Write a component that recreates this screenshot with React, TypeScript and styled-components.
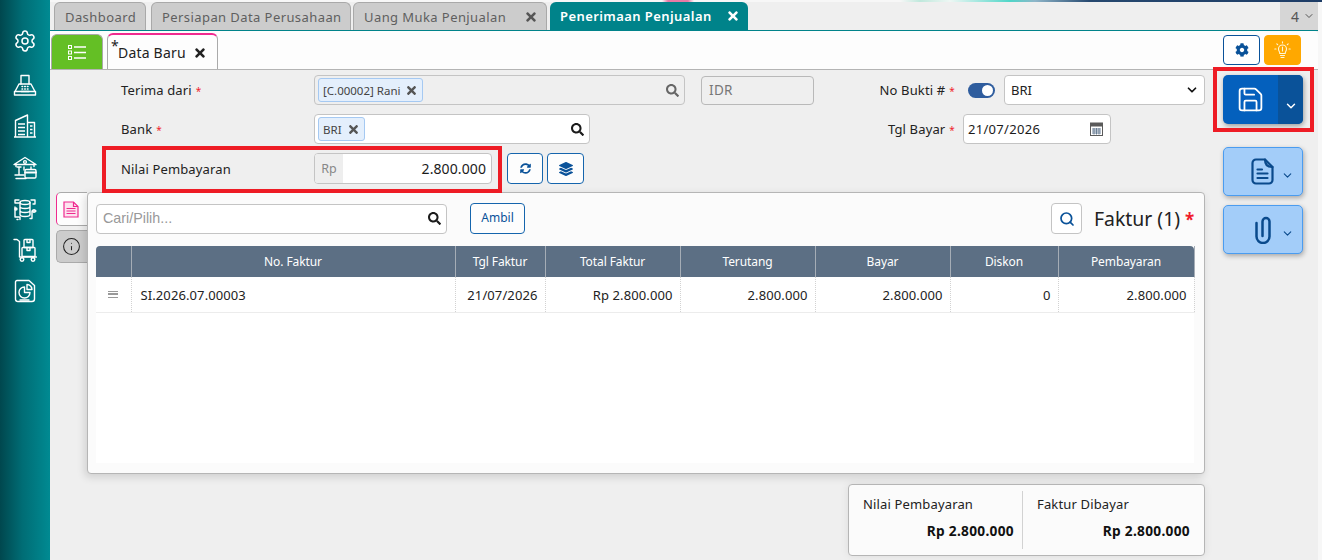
import React from "react";
import styled, { createGlobalStyle } from "styled-components";
import { FaTimes, FaSearch, FaCog, FaSyncAlt, FaLayerGroup } from "react-icons/fa";
import { Save, ChevronDown, Info, Settings, Search as SearchIcon } from "lucide-react";

const Global = createGlobalStyle`
  html, body { margin: 0; padding: 0; height: 560px; overflow: hidden; background: #f7f7f7; }
  body { font-family: "Noto Sans", "Open Sans", sans-serif; font-size: 13px; color: #1b1b1b; }
  * { box-sizing: border-box; }
`;

const Page = styled.div`display: flex; width: 1322px; height: 560px;`;
const Sidebar = styled.aside`
  width: 50px; height: 560px; flex: none; display: flex; flex-direction: column; align-items: center;
  padding-top: 29px; gap: 17.2px; background: linear-gradient(90deg, #00474e 0%, #006d75 45%, #008a92 100%);
  svg { display: block; width: 24px; height: 24px; color: #fff; flex: none; }
  svg:first-child { margin-bottom: 3px; }
`;
const Main = styled.main`width: 1268px; flex: none; display: flex; flex-direction: column; background: #efefef;`;
const TabBar = styled.div`
  height: 31px; flex: none; display: flex; align-items: flex-end; padding: 2px 0 0 4px; position: relative;
  border-bottom: 1px solid #00838a; background: #efefef;
`;
const TopStrip = styled.div`
  position: absolute; left: 0; right: -4px; top: 0; height: 2px;
  background: linear-gradient(90deg, #f7f7f7 0, #f7f7f7 612px, #e87aa5 618px, #e87aa5 638px, #f7f7f7 644px, #f7f7f7 850px, #bfe8dc 870px, #eef7f4 900px, #4fd6c8 960px, #8fb6c9 985px, #26486f 1040px, #1d3c66 1272px);
`;
const Tab = styled.div<{ $active?: boolean; $w: number; $ml?: number }>`
  width: ${p => p.$w}px; height: 28px; margin-left: ${p => p.$ml ?? 0}px; flex: none; white-space: nowrap;
  display: flex; align-items: center; justify-content: space-between; padding: 0 10px;
  border-radius: 6px 6px 0 0; letter-spacing: .42px; font-size: 13px;
  background: ${p => (p.$active ? "#00838a" : "#cccccc")};
  color: ${p => (p.$active ? "#fff" : "#5f5f5f")};
  font-weight: ${p => (p.$active ? 600 : 400)};
  border: ${p => (p.$active ? "none" : "1px solid #a9a9a9")};
  border-bottom: none;
  svg { font-size: 14px; color: ${p => (p.$active ? "#fff" : "#555")}; margin-right: -2px; }
`;
const TabCount = styled.div`
  margin-left: auto; width: 38px; height: 28px; background: #d6d6d6; color: #555; display: flex;
  align-items: center; justify-content: flex-end; gap: 4px; padding-right: 3px; font-size: 14px;
`;
const SubBar = styled.div`
  height: 39px; flex: none; background: #fdfdfd; border-bottom: 1px solid #b4b4b4; display: flex;
  align-items: flex-end; padding: 0 17px 0 1px; border-top-right-radius: 4px;
`;
const ListBtn = styled.div`
  width: 52px; height: 35px; background: #64bf25; border: 1px solid #a9a9a9; border-bottom: none;
  border-radius: 6px 6px 0 0; display: flex; align-items: center; justify-content: center;
`;
const DocTab = styled.div`
  width: 111px; height: 36px; margin-left: 4px; position: relative; background: #fdfdfd;
  border: 1px solid #aaa; border-top: 2px solid #ef2a8f; border-bottom: none; border-radius: 6px 6px 0 0;
  display: flex; align-items: center; padding: 0 0 0 10px; font-size: 14px; letter-spacing: .2px; color: #222;
  svg { margin-left: 7px; margin-top: 2px; font-size: 14px; color: #222; }
`;
const Star = styled.span`position: absolute; left: 3px; top: 1px; font-size: 14px;`;
const TopBtns = styled.div`margin-left: auto; display: flex; gap: 4px; align-self: flex-start; padding-top: 4px;`;
const SquareBtn = styled.div<{ $orange?: boolean }>`
  width: 37px; height: 30px; border-radius: 4px; display: flex; align-items: center; justify-content: center;
  background: ${p => (p.$orange ? "#ffa800" : "#fff")};
  border: 1px solid ${p => (p.$orange ? "#ffa800" : "#0a5299")};
  color: ${p => (p.$orange ? "#fff3c9" : "#0a5299")}; font-size: 14px;
`;
const Body = styled.div`flex: 1; display: flex; align-items: flex-start; padding-top: 5px;`;
const Left = styled.div`width: 1155px; flex: none; display: flex; flex-direction: column;`;
const Row = styled.div<{ $mb: number; $h?: number }>`
  display: grid; grid-template-columns: 810px 345px; height: ${p => p.$h ?? 30}px; margin-bottom: ${p => p.$mb}px; position: relative;
`;
const LeftCell = styled.div`display: flex; align-items: center; padding-left: 71px;`;
const RightCell = styled.div`display: flex; align-items: center;`;
const Label = styled.label`width: 193px; flex: none; font-size: 13px; letter-spacing: .14px; color: #222;`;
const Req = styled.span`color: #f01c2c; margin-left: 4px; font-size: 10px;`;
const RightLabel = styled.label`width: 95px; flex: none; text-align: right; font-size: 13px; letter-spacing: .14px; color: #222;`;
const Lookup = styled.div<{ $w: number; $muted?: boolean }>`
  width: ${p => p.$w}px; height: 30px; flex: none; border: 1px solid #c4c4c4; border-radius: 4px;
  background: ${p => (p.$muted ? "#efefef" : "#fff")}; display: flex; align-items: center; padding: 0 5px 0 3px;
  svg.s { margin-left: auto; font-size: 13px; color: ${p => (p.$muted ? "#666" : "#1b1b1b")}; }
`;
const Chip = styled.span`
  height: 24px; display: inline-flex; align-items: center; gap: 5px; padding: 0 4px; border: 1px solid #a5c9f2;
  border-radius: 3px; background: #e4effc; font-size: 11.5px; color: #444;
  svg { font-size: 13px; color: #555; }
`;
const Readonly = styled.input`
  width: 113px; height: 29px; margin-left: 16px; border: 1px solid #b9b9b9; border-radius: 4px;
  background: #efefef; padding: 0 7px; font: 13.5px "Noto Sans", sans-serif; color: #777; letter-spacing: .3px; outline: none;
`;
const Toggle = styled.div`
  width: 27px; height: 15px; margin-left: 13px; border-radius: 8px; background: #2f5d9e; position: relative; flex: none;
  &::after { content: ""; position: absolute; right: 2px; top: 2px; width: 11px; height: 11px; border-radius: 50%; background: #fff; }
`;
const SelectWrap = styled.div`
  width: 201px; height: 30px; margin-left: 9px; position: relative;
  svg { position: absolute; right: 6px; top: 8px; pointer-events: none; color: #111; }
`;
const Select = styled.select`
  width: 100%; height: 100%; appearance: none; border: 1px solid #c4c4c4; border-radius: 4px; background: #fff;
  padding: 0 6px; font: 13px "Noto Sans", sans-serif; color: #222; outline: none;
`;
const DateBox = styled.div`
  width: 148px; height: 30px; margin-left: 8px; border: 1px solid #c4c4c4; border-radius: 4px; background: #fff;
  display: flex; align-items: center; justify-content: space-between; padding: 0 7px 0 4px; font-size: 13px; letter-spacing: .3px;
`;
const Amount = styled.div`
  width: 178px; height: 31px; flex: none; border: 1px solid #c4c4c4; border-radius: 4px; background: #fff;
  display: flex; align-items: center; overflow: hidden; font-size: 14px;
`;
const Prefix = styled.span`
  width: 28px; height: 100%; background: #eeeeee; color: #888; display: flex; align-items: center; justify-content: center; font-size: 12.5px;
`;
const AmountValue = styled.span`margin-left: auto; padding-right: 5px; letter-spacing: .1px; color: #1b1b1b;`;
const OutlineBtn = styled.button<{ $w: number; $ml: number; $fs: number }>`
  width: ${p => p.$w}px; height: 31px; margin-left: ${p => p.$ml}px; flex: none; border: 1px solid #1565ad; border-radius: 4px;
  background: #fdfdfd; color: #0a5299; display: flex; align-items: center; justify-content: center; font-size: ${p => p.$fs}px; padding: 0;
`;
const Highlight = styled.div`
  position: absolute; pointer-events: none; border: 4.5px solid #ee1c25;
`;
const FieldHighlight = styled(Highlight)`left: 52px; top: -7px; width: 400px; height: 47px;`;
const SaveHighlight = styled(Highlight)`left: -10px; top: -8px; width: 101px; height: 65px;`;
const CardArea = styled.div`display: flex; padding-left: 6px; height: 282px;`;
const SideTabs = styled.div`width: 31px; flex: none; display: flex; flex-direction: column; gap: 4px;`;
const SideTab = styled.div<{ $active?: boolean }>`
  width: 31px; height: ${p => (p.$active ? 34 : 33)}px; display: flex; align-items: center; justify-content: center;
  padding-right: 2px; border-radius: 5px 0 0 5px;
  background: ${p => (p.$active ? "#fdfdfd" : "#cccccc")};
  border: 1px solid #aaa; border-left: 1px solid ${p => (p.$active ? "#ef2a8f" : "#aaa")}; border-right: none;
  color: ${p => (p.$active ? "#ef2a8f" : "#222")};
`;
const Card = styled.section`
  width: 1118px; flex: none; height: 282px; background: #fbfbfb; border: 1px solid #b5b5b5; border-radius: 4px;
  box-shadow: -2px 3px 8px rgba(0,0,0,.14); padding: 10px 10px 10px 8px; display: flex; flex-direction: column;
`;
const CardHead = styled.div`display: flex; align-items: center; height: 31px; margin-bottom: 12px;`;
const Search = styled.div`
  width: 351px; height: 30px; border: 1px solid #c4c4c4; border-radius: 4px; background: #fff; display: flex;
  align-items: center; justify-content: space-between; padding: 0 5px 2px 6px; font: 14.3px "Liberation Sans", sans-serif; color: #999;
  svg { font-size: 13px; color: #1b1b1b; margin-top: 2px; }
`;
const AmbilBtn = styled.button`
  width: 55px; height: 31px; margin-left: 23px; border: 1px solid #1565ad; border-radius: 4px; background: #fdfdfd;
  color: #0a5299; font: 12px "Noto Sans", sans-serif; padding: 0 0 2px;
`;
const IconBtn = styled.button`
  width: 31px; height: 31px; margin-left: auto; border: 1px solid #c4c4c4; border-radius: 4px; background: #fff; color: #0a5299;
  display: flex; align-items: center; justify-content: center; padding: 0;
`;
const CardTitle = styled.h2`margin: 0 0 0 12px; font-size: 19.4px; font-weight: 400; color: #222; white-space: nowrap; width: 100px;`;
const TitleStar = styled.span`color: #f01c2c; margin-left: 5px; font-size: 17px; font-weight: 700;`;
const TableWrap = styled.div`flex: 1; background: #fff;`;
const Table = styled.table`width: 1098px; border-collapse: collapse; table-layout: fixed; font-size: 13px;`;
const Th = styled.th`
  height: 31px; background: #5c6f84; color: #fff; font-weight: 400; font-size: 12px; letter-spacing: -.1px; padding: 0;
  border-right: 1px solid #a5adb6; text-align: center;
  &:first-child { border-top-left-radius: 4px; }
  &:last-child { border-top-right-radius: 4px; }
`;
const Td = styled.td<{ $align?: string }>`
  height: 35px; padding: 1px 7px 0 9px; text-align: ${p => p.$align ?? "right"}; border-bottom: 1px solid #ececec;
  border-right: 1px dotted #d2d2d2; color: #222; white-space: nowrap; letter-spacing: .1px;
`;
const GripCell = styled(Td)`padding: 0; text-align: center; color: #999;`;
const Grip = styled.span`
  display: block; width: 10px; height: 7px; margin: 0 auto; border-top: 1.5px solid #999; border-bottom: 1.5px solid #999; position: relative;
  &::after { content: ""; position: absolute; left: 0; right: 0; top: 1.5px; height: 1.5px; background: #999; }
`;
const Summary = styled.div`
  width: 357px; height: 72px; margin: 10px 0 0 798px; background: #fbfbfb; border: 1px solid #b5b5b5; border-radius: 4px;
  box-shadow: 0 0 8px rgba(0,0,0,.08); display: grid; grid-template-columns: 173px 1fr; padding: 6px 0;
`;
const SummaryCol = styled.div<{ $sep?: boolean }>`
  display: flex; flex-direction: column; gap: 8px; padding: ${p => (p.$sep ? "4px 14px 0" : "4px 8px 0 14px")};
  ${p => (p.$sep ? "border-left: 1px solid #d2d2d2;" : "")}
`;
const SummaryLabel = styled.div`font-size: 13px; letter-spacing: .15px; color: #222;`;
const SummaryValue = styled.div`font-size: 13.7px; font-weight: 700; text-align: right; letter-spacing: .3px; color: #111;`;
const Right = styled.div`width: 80px; margin-left: 18px; flex: none; display: flex; flex-direction: column; position: relative;`;
const SaveBtn = styled.div`
  height: 49px; display: grid; grid-template-columns: 55px 25px; border-radius: 5px; overflow: hidden; color: #fff;
  box-shadow: 1px 2px 5px rgba(0,0,0,.35); margin-bottom: 23px; background: #0460bd;
`;
const SaveMain = styled.div`display: flex; align-items: center; justify-content: center;`;
const SaveDrop = styled.div`background: #0a5299; display: flex; align-items: center; justify-content: center; padding-top: 12px;`;
const ActionBtn = styled.div`
  width: 80px; height: 49px; margin-bottom: 9px; background: #a3cdf9; border: 1px solid #4a9cf0; border-radius: 5px;
  box-shadow: 1px 2px 5px rgba(0,0,0,.3); display: flex; align-items: center; justify-content: flex-end; padding-right: 8px; gap: 7px; color: #0a4a8c;
  svg:last-child { margin-top: 8px; }
`;

const GreenListIcon = () => (
  <svg width="18" height="15" viewBox="0 0 18 15" fill="none" stroke="#fff">
    <rect x=".5" y=".5" width="3" height="3" /><rect x=".5" y="6" width="3" height="3" /><rect x=".5" y="11.5" width="3" height="3" />
    <path d="M6 2h12M6 7.5h12M6 13h12" strokeWidth="1.4" />
  </svg>
);
const BulbIcon = () => (
  <svg width="17" height="19" viewBox="0 0 17 19" fill="none" stroke="#fff6d8" strokeWidth="1.1" strokeLinecap="round">
    <path d="M5.8 12.5c0-2-1.3-2.4-1.3-4.5a4 4 0 0 1 8 0c0 2.100-1.300 2.500-1.300 4.500z" />
    <path d="M6.500 14.500h4M7 16.500h3M8.500 6v4" />
    <path d="M8.500 .8v1.200M2.800 2.800l.9.9M14.200 2.800l-.9.9M.8 8h1.200M15 8h1.200" />
  </svg>
);
const line = { fill: "none", stroke: "currentColor", strokeWidth: 1.4, strokeLinejoin: "round" as const, strokeLinecap: "round" as const };
const FaxIcon = () => (
  <svg viewBox="0 0 24 24" {...line}>
    <path d="M1.500 18.500h21v3.500h-21zM2 18.500l4-7.500h12l4 7.500" /><path d="M8 11V2.500h8V11" /><path d="M8 18.500h8" />
    <path d="M9 13.500h.6M11.700 13.500h.6M14.400 13.500h.6M9 16h.6M11.700 16h.6M14.400 16h.6" strokeWidth="1.500" />
  </svg>
);
const BuildingIcon = () => (
  <svg viewBox="0 0 24 24" {...line} strokeLinecap="butt">
    <path d="M1 23h22M2.500 23V6.500L14.500 1v22M14.500 8.500h7V23" />
    <path d="M5 10h7M5 13.500h7M5 17h7M5 20.500h7" strokeWidth="1.600" /><path d="M17 12h2.500M17 15.500h2.500M17 19h2.500" strokeWidth="1.600" />
  </svg>
);
const BankIcon = () => (
  <svg viewBox="0 0 24 24" {...line}>
    <path d="M1 8.500 12 1.500l11 7H1zM3 8.500v2M21 8.500v2" /><circle cx="12" cy="6" r="1.400" />
    <path d="M6 11v7M3 22.500h10M2 19h9M4 11h4" /><path d="M11 11v3" /><path d="M18 11v2" />
    <rect x="12" y="13.500" width="11" height="8.500" rx="1.200" /><path d="M12 16.500h11" strokeWidth="1.800" />
  </svg>
);
const NetworkIcon = () => (
  <svg viewBox="0 0 24 24" {...line}>
    <ellipse cx="12" cy="5.500" rx="5" ry="2" /><path d="M7 5.500v12c0 1.200 2.200 2 5 2s5-.8 5-2v-12M7 9.500c0 1.200 2.200 2 5 2s5-.8 5-2M7 13.500c0 1.200 2.200 2 5 2s5-.8 5-2" />
    <path d="M6 3H2v3h4M2 10v10h5v2.500M4 22.500h1" /><path d="M18 3h4v4h-2M23 14h-4v7M17 21.500h2" /><circle cx="21" cy="14" r="1.400" /><circle cx="3" cy="12" r="1" />
  </svg>
);
const CartIcon = () => (
  <svg viewBox="0 0 24 24" {...line}>
    <path d="M1 1.500h3l2.500 2v15.500h17" /><rect x="9" y="9.500" width="13" height="9" rx=".8" /><rect x="11" y="1.500" width="9" height="8" rx=".8" />
    <path d="M14 1.500v3h3v-3M14 9.500v3h3v-3" /><circle cx="9" cy="21.500" r="1.800" /><circle cx="20" cy="21.500" r="1.800" />
  </svg>
);
const ReportIcon = () => (
  <svg viewBox="0 0 24 24" {...line}>
    <path d="M4 1.500h12l5.500 5v13.500a2.500 2.500 0 0 1-2.500 2.500H5A2.500 2.500 0 0 1 2.500 20V3A1.500 1.500 0 0 1 4 1.500z" />
    <path d="M11.500 8a5.500 5.500 0 1 0 5.500 5.500h-5.500z" /><path d="M14 5.500a5 5 0 0 1 5 5h-5z" /><path d="M7 21h9" />
  </svg>
);
const PinkDoc = () => (
  <svg width="16" height="17" viewBox="0 0 16 17" fill="#fde3ef" stroke="#ef2a8f" strokeWidth="1.200">
    <path d="M1 1h9.500L15 5.500V16H1z" /><path d="M10.500 1v4.500H15" fill="none" /><path d="M3.500 7.500h9M3.500 10h9M3.500 12.500h9" />
  </svg>
);
const CalendarIcon = () => (
  <svg width="13" height="14" viewBox="0 0 13 14">
    <rect x=".5" y="1" width="12" height="12.500" fill="#fff" stroke="#5a5a5a" />
    <rect x=".5" y="1" width="12" height="3.500" fill="#5a5a5a" />
    <path d="M2 7h9M2 9h9M2 11h9M4 6v6.500M6.500 6v6.500M9 6v6.500" stroke="#6a7f95" strokeWidth="1" />
  </svg>
);
const DocIcon = () => (
  <svg width="23" height="27" viewBox="0 0 23 27" fill="none" stroke="#0a4a8c" strokeWidth="2.200" strokeLinejoin="round" strokeLinecap="round">
    <path d="M5 1.500h9l7.500 7.500v13a3.500 3.500 0 0 1-3.500 3.500H5A3.500 3.500 0 0 1 1.500 22V5A3.500 3.500 0 0 1 5 1.500z" />
    <path d="M14 1.500c0 5 2 7.500 7.500 7.500" /><path d="M6.500 11.500h4.500M6.500 15.500h10M6.500 20h10" />
  </svg>
);
const ClipIcon = () => (
  <svg width="18" height="28" viewBox="0 0 18 28" fill="none" stroke="#0a4a8c" strokeWidth="2.500" strokeLinecap="round" style={{ marginRight: 2 }}>
    <path d="M8.500 20V5.500a3.500 3.500 0 0 1 7 0V20.500a6.500 6.500 0 0 1-13 0V7" />
  </svg>
);

const rows = ["SI.2026.07.00003", "21/07/2026", "Rp 2.800.000", "2.800.000", "2.800.000", "0", "2.800.000"];
const cols = [
  { t: "", w: 35 }, { t: "No. Faktur", w: 324 }, { t: "Tgl Faktur", w: 90 }, { t: "Total Faktur", w: 135 },
  { t: "Terutang", w: 135 }, { t: "Bayar", w: 135 }, { t: "Diskon", w: 108 }, { t: "Pembayaran", w: 136 },
];

export default function App() {
  return (
    <Page>
      <Global />
      <Sidebar>
        <Settings strokeWidth={1.5} /><FaxIcon /><BuildingIcon /><BankIcon /><NetworkIcon /><CartIcon /><ReportIcon />
      </Sidebar>
      <Main>
        <TabBar>
          <TopStrip />
          <Tab $w={92}>Dashboard</Tab>
          <Tab $w={200} $ml={5}>Persiapan Data Perusahaan</Tab>
          <Tab $w={194} $ml={2}>Uang Muka Penjualan <FaTimes /></Tab>
          <Tab $w={198} $ml={3} $active>Penerimaan Penjualan <FaTimes /></Tab>
          <TabCount>4 <ChevronDown size={12} /></TabCount>
        </TabBar>
        <SubBar>
          <ListBtn><GreenListIcon /></ListBtn>
          <DocTab><Star>*</Star>Data Baru<FaTimes /></DocTab>
          <TopBtns>
            <SquareBtn><FaCog /></SquareBtn>
            <SquareBtn $orange><BulbIcon /></SquareBtn>
          </TopBtns>
        </SubBar>
        <Body>
          <Left>
            <Row $mb={9}>
              <LeftCell>
                <Label>Terima dari<Req>*</Req></Label>
                <Lookup $w={371} $muted>
                  <Chip>[C.00002] Rani <FaTimes /></Chip>
                  <FaSearch className="s" />
                </Lookup>
                <Readonly readOnly value="IDR" />
              </LeftCell>
              <RightCell>
                <RightLabel>No Bukti #<Req>*</Req></RightLabel>
                <Toggle />
                <SelectWrap>
                  <Select defaultValue="BRI"><option>BRI</option></Select>
                  <ChevronDown size={14} strokeWidth={3} />
                </SelectWrap>
              </RightCell>
            </Row>
            <Row $mb={9}>
              <LeftCell>
                <Label>Bank<Req>*</Req></Label>
                <Lookup $w={276}>
                  <Chip>BRI <FaTimes /></Chip>
                  <FaSearch className="s" />
                </Lookup>
              </LeftCell>
              <RightCell>
                <RightLabel>Tgl Bayar<Req>*</Req></RightLabel>
                <DateBox>21/07/2026 <CalendarIcon /></DateBox>
              </RightCell>
            </Row>
            <Row $mb={8} $h={31}>
              <LeftCell>
                <Label>Nilai Pembayaran</Label>
                <Amount><Prefix>Rp</Prefix><AmountValue>2.800.000</AmountValue></Amount>
                <OutlineBtn $w={36} $ml={15} $fs={11}><FaSyncAlt /></OutlineBtn>
                <OutlineBtn $w={37} $ml={4} $fs={14}><FaLayerGroup /></OutlineBtn>
              </LeftCell>
              <FieldHighlight />
            </Row>
            <CardArea>
              <SideTabs>
                <SideTab $active><PinkDoc /></SideTab>
                <SideTab><Info size={19} strokeWidth={1.3} /></SideTab>
              </SideTabs>
              <Card>
                <CardHead>
                  <Search>Cari/Pilih...<FaSearch /></Search>
                  <AmbilBtn>Ambil</AmbilBtn>
                  <IconBtn><SearchIcon size={16} strokeWidth={2.6} /></IconBtn>
                  <CardTitle>Faktur (1)<TitleStar>*</TitleStar></CardTitle>
                </CardHead>
                <TableWrap>
                  <Table>
                    <colgroup>{cols.map((c, i) => <col key={i} style={{ width: c.w }} />)}</colgroup>
                    <thead><tr>{cols.map((c, i) => <Th key={i}>{c.t}</Th>)}</tr></thead>
                    <tbody>
                      <tr>
                        <GripCell><Grip /></GripCell>
                        {rows.map((r, i) => <Td key={i} $align={i === 0 ? "left" : "right"}>{r}</Td>)}
                      </tr>
                    </tbody>
                  </Table>
                </TableWrap>
              </Card>
            </CardArea>
            <Summary>
              <SummaryCol>
                <SummaryLabel>Nilai Pembayaran</SummaryLabel>
                <SummaryValue>Rp 2.800.000</SummaryValue>
              </SummaryCol>
              <SummaryCol $sep>
                <SummaryLabel>Faktur Dibayar</SummaryLabel>
                <SummaryValue>Rp 2.800.000</SummaryValue>
              </SummaryCol>
            </Summary>
          </Left>
          <Right>
            <SaveHighlight />
            <SaveBtn>
              <SaveMain><Save size={29} strokeWidth={1.5} /></SaveMain>
              <SaveDrop><ChevronDown size={14} strokeWidth={2.5} /></SaveDrop>
            </SaveBtn>
            <ActionBtn><DocIcon /><ChevronDown size={13} strokeWidth={2} /></ActionBtn>
            <ActionBtn><ClipIcon /><ChevronDown size={13} strokeWidth={2} /></ActionBtn>
          </Right>
        </Body>
      </Main>
    </Page>
  );
}
